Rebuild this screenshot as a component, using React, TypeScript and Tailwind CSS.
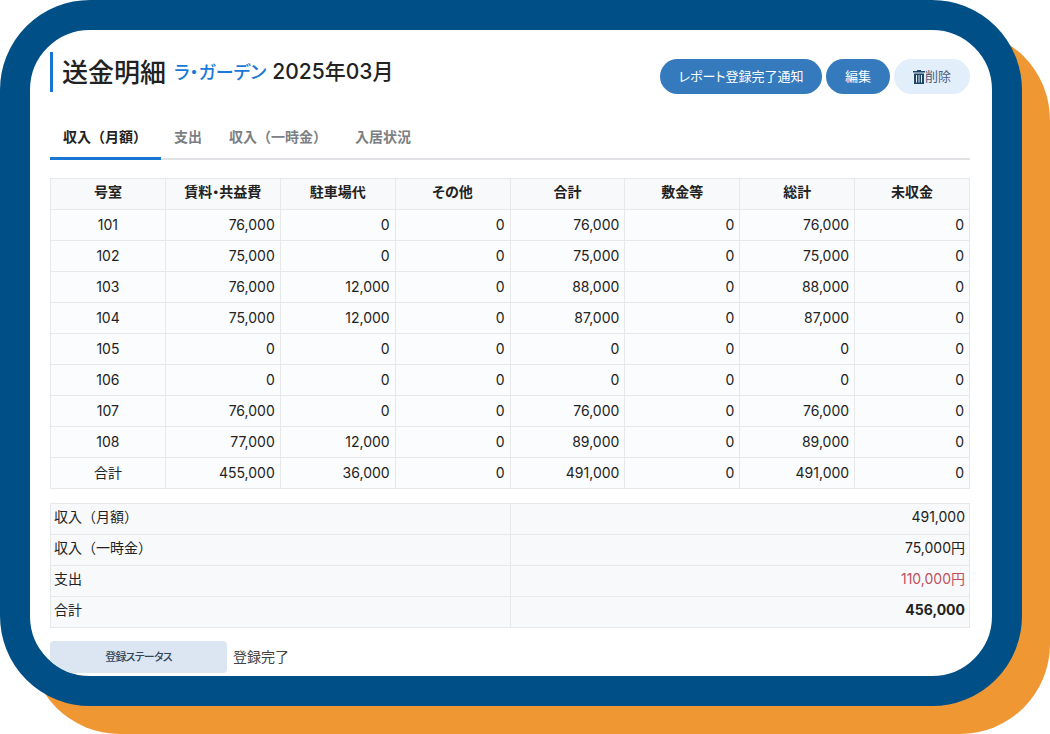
const font = "[font-family:Inter,'Noto_Sans_CJK_JP',sans-serif]";

const headers = ["号室", "賃料・共益費", "駐車場代", "その他", "合計", "敷金等", "総計", "未収金"];

const rows = [
  ["101", "76,000", "0", "0", "76,000", "0", "76,000", "0"],
  ["102", "75,000", "0", "0", "75,000", "0", "75,000", "0"],
  ["103", "76,000", "12,000", "0", "88,000", "0", "88,000", "0"],
  ["104", "75,000", "12,000", "0", "87,000", "0", "87,000", "0"],
  ["105", "0", "0", "0", "0", "0", "0", "0"],
  ["106", "0", "0", "0", "0", "0", "0", "0"],
  ["107", "76,000", "0", "0", "76,000", "0", "76,000", "0"],
  ["108", "77,000", "12,000", "0", "89,000", "0", "89,000", "0"],
  ["合計", "455,000", "36,000", "0", "491,000", "0", "491,000", "0"],
];

const summary = [
  { label: "収入（月額）", value: "491,000", cls: "" },
  { label: "収入（一時金）", value: "75,000円", cls: "" },
  { label: "支出", value: "110,000円", cls: "text-[#c0505f]" },
  { label: "合計", value: "456,000", cls: "font-bold" },
];

const tabs = ["収入（月額）", "支出", "収入（一時金）", "入居状況"];

function TrashIcon() {
  return (
    <svg viewBox="0 0 12 14" className="w-3 h-3.5 fill-[#1c4568]">
      <path d="M4 0h4v1h4v1.500H0V1h4z" />
      <path d="M1 3.500h10V14H1zM3 5v7.500h1V5zM5.500 5v7.500h1V5zM8 5v7.500h1V5z" fillRule="evenodd" />
    </svg>
  );
}

export default function App() {
  return (
    <div className={`relative w-[1050px] h-[734px] overflow-hidden bg-white ${font}`}>
      {/* orange block behind the frame */}
      <div className="absolute left-[30px] top-[30px] w-[1020px] h-[704px] rounded-[90px] bg-[#ee9733]" />

      <div className="relative w-[1022px] h-[706px] rounded-[90px] border-[30px] border-[#005087] bg-white overflow-hidden">
        <div className="h-full pt-[22px] pl-5 pr-[22px] rounded-[60px] overflow-hidden">
          {/* Header */}
          <div className="flex items-center justify-between h-10">
            <div className="flex items-center h-10 border-l-[3px] border-[#1976d2] pl-[9px]">
              <span className="text-[26px] font-medium text-[#222]">送金明細</span>
              <span className="ml-2 text-[18px] font-medium text-[#1a78d6] [font-feature-settings:'palt']">ラ・ガーデン</span>
              <span className="ml-1.5 text-[21px] font-medium text-[#222]">2025年03月</span>
            </div>
            <div className="flex gap-1 mt-[7px] translate-y-[1px]">
              <button className="w-[162px] h-[35px] rounded-full bg-[#357abd] text-white text-[13px] [font-feature-settings:'palt']">レポート登録完了通知</button>
              <button className="w-16 h-[35px] rounded-full bg-[#357abd] text-white text-[13px]">編集</button>
              <button className="w-[76px] h-[35px] rounded-full bg-[#e3eefb] text-[#4a6078] text-[13px] flex items-center justify-center">
                <TrashIcon />
                削除
              </button>
            </div>
          </div>

          {/* Tabs */}
          <div className="flex mt-[24px] h-11 border-b-2 border-[#e0e2e5]">
            {tabs.map((tab, i) => (
              <div
                key={tab}
                className={
                  i === 0
                    ? "px-[13px] pt-[10px] h-[44px] text-[14px] font-semibold text-[#222] border-b-[3px] border-[#1976d2] w-[111px] whitespace-nowrap"
                    : i === 1
                      ? "px-[13px] pt-[10px] text-[14px] font-semibold text-[#7b7f84] whitespace-nowrap"
                      : "px-[14px] pt-[10px] text-[14px] font-semibold text-[#7b7f84] whitespace-nowrap"
                }
              >
                {tab}
              </div>
            ))}
          </div>

          {/* Monthly table */}
          <table className="mt-[18px] w-[920px] table-fixed border-separate border-spacing-0 border-t border-l border-[#e6e8ea] text-[14px] text-[#222]">
            <thead>
              <tr>
                {headers.map((h) => (
                  <th key={h} className="h-[31px] border-r border-b border-[#e6e8ea] bg-[#f8f9fa] text-[14px] font-semibold pt-0 px-0 pb-[5px] [font-feature-settings:'palt']">
                    {h}
                  </th>
                ))}
              </tr>
            </thead>
            <tbody>
              {rows.map((row) => (
                <tr key={row[0]}>
                  {row.map((cell, i) => (
                    <td
                      key={i}
                      className={
                        i === 0
                          ? "h-[31px] border-r border-b border-[#e6e8ea] bg-[#fbfcfd] text-center pt-0 px-0 pb-[2px]"
                          : "h-[31px] border-r border-b border-[#e6e8ea] bg-[#fbfcfd] text-right px-[5px] pt-0 pb-[2px]"
                      }
                    >
                      {cell}
                    </td>
                  ))}
                </tr>
              ))}
            </tbody>
          </table>

          {/* Summary table */}
          <table className="mt-[14px] w-[920px] table-fixed border-separate border-spacing-0 border-t border-l border-[#e6e8ea] text-[14px] text-[#222]">
            <tbody>
              {summary.map((row) => (
                <tr key={row.label}>
                  <td className="h-[31px] border-r border-b border-[#e6e8ea] bg-[#f8f9fa] pl-[3px] pr-[4px] pt-0 pb-[5px]">{row.label}</td>
                  <td className={`h-[31px] border-r border-b border-[#e6e8ea] bg-[#f8f9fa] pl-[3px] pr-[4px] pt-0 pb-[5px] text-right ${row.cls}`}>{row.value}</td>
                </tr>
              ))}
            </tbody>
          </table>

          {/* Status */}
          <div className="flex items-center mt-[13px]">
            <div className="w-[177px] h-8 rounded bg-[#dce6f3] flex items-center justify-center text-[11px] font-medium tracking-[-0.8px] text-[#33475b] [font-feature-settings:'palt']">
              登録ステータス
            </div>
            <span className="ml-1.5 pb-0.5 text-[14px] text-[#444]">登録完了</span>
          </div>
        </div>
      </div>
    </div>
  );
}
